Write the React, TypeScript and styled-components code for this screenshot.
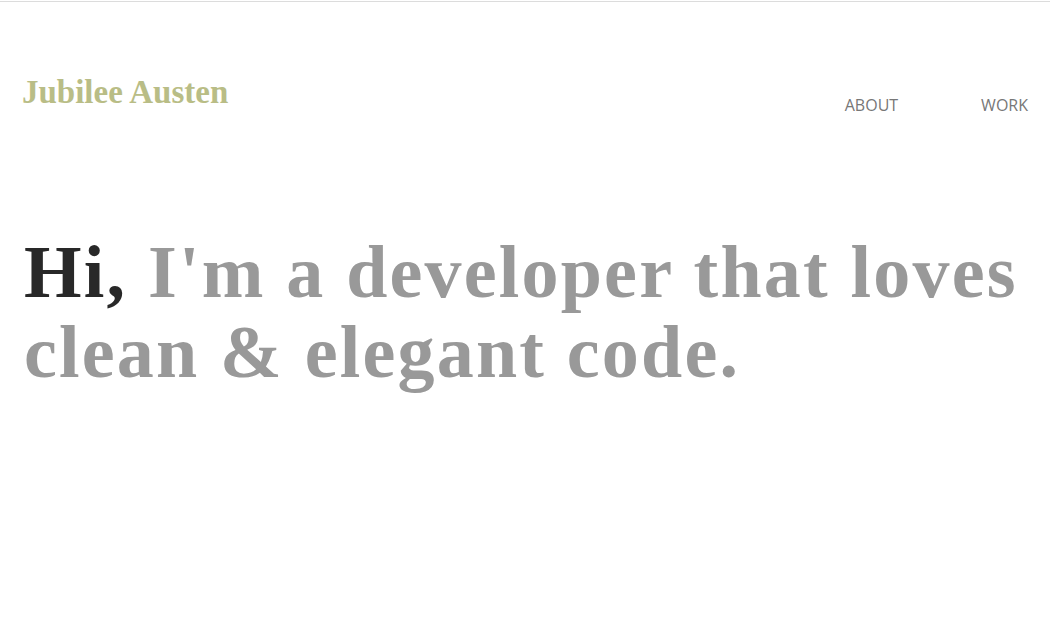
import React from "react";
import styled, { createGlobalStyle } from "styled-components";

const Global = createGlobalStyle`
  html, body { margin: 0; padding: 0; background: #fff; }
  body { border-top: 1px solid #fff; }
  * { box-sizing: border-box; }
`;

const Page = styled.div`
  border-top: 1px solid #dcdcdc;
  min-height: 622px;
  padding: 0 22px 0 22px;
`;

const Header = styled.header`
  display: flex;
  justify-content: space-between;
  align-items: flex-start;
  padding-top: 70px;
`;

const Logo = styled.a`
  font-family: "Liberation Serif", serif;
  font-weight: bold;
  font-size: 33px;
  color: #b9bd86;
  text-decoration: none;
  line-height: 40px;
`;

const Nav = styled.nav`
  display: flex;
  gap: 83px;
  padding-top: 22px;
`;

const NavLink = styled.a`
  font-family: "Open Sans", sans-serif;
  font-size: 16px;
  color: #777;
  text-decoration: none;
  text-transform: uppercase;
  line-height: 22px;
`;

const Hero = styled.h1`
  margin: 116px 0 0 2px;
  font-family: "Liberation Serif", serif;
  font-weight: bold;
  font-size: 74px;
  letter-spacing: 2.2px;
  line-height: 80px;
  color: #999;
`;

const Strong = styled.span`
  color: #282828;
`;

export default function App() {
  return (
    <>
      <Global />
      <Page>
        <Header>
          <Logo href="#">Jubilee Austen</Logo>
          <Nav>
            <NavLink href="#">About</NavLink>
            <NavLink href="#">Work</NavLink>
          </Nav>
        </Header>
        <Hero>
          <Strong>Hi,</Strong> I'm a developer that loves clean &amp; elegant code.
        </Hero>
      </Page>
    </>
  );
}
